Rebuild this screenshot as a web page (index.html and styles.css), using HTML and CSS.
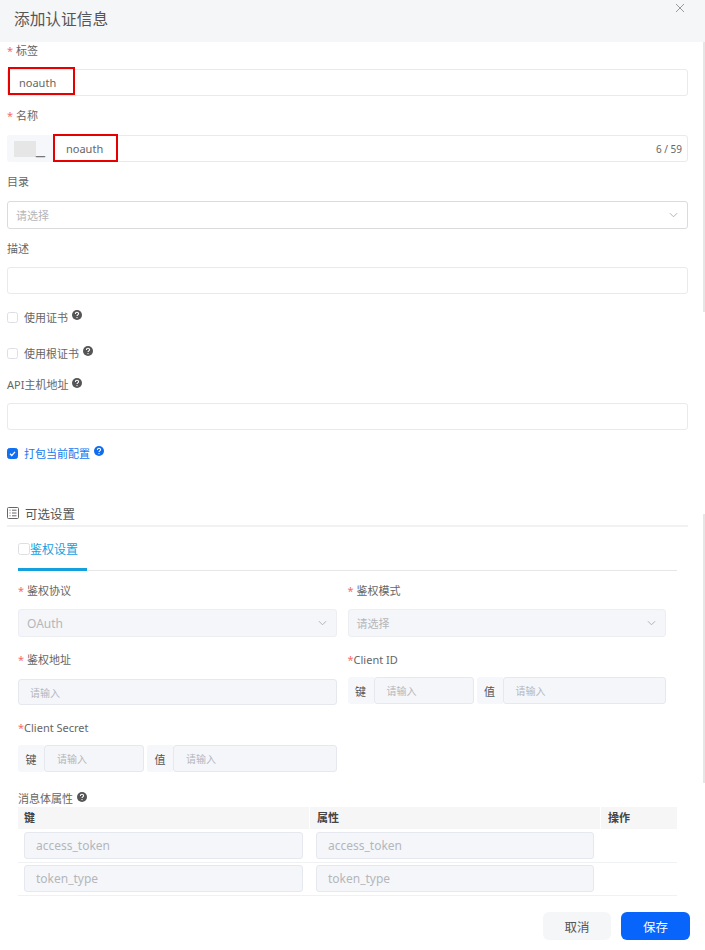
FILE: index.html
```html
<!DOCTYPE html>
<html lang="zh-CN">
<head>
<meta charset="utf-8">
<title>添加认证信息</title>
<link rel="stylesheet" href="styles.css">
</head>
<body>
<svg class="defs" width="0" height="0" aria-hidden="true">
  <symbol id="help" viewBox="0 0 10 10">
    <circle cx="5" cy="5" r="5" fill="currentColor"/>
    <path d="M3.4 3.9c0-1 .7-1.6 1.6-1.6s1.6.6 1.6 1.4c0 1.2-1.6 1.2-1.6 2.4" fill="none" stroke="#fff" stroke-width="1.1"/>
    <circle cx="5" cy="7.6" r=".7" fill="#fff"/>
  </symbol>
  <symbol id="chev" viewBox="0 0 10 6">
    <path d="M1 1l4 4 4-4" fill="none" stroke="currentColor" stroke-width="1"/>
  </symbol>
</svg>
<div class="dialog">
  <header class="head">
    <h1 class="title">添加认证信息</h1>
    <svg class="close" viewBox="0 0 10 10" aria-label="关闭"><path d="M1 1l8 8M9 1l-8 8" stroke="currentColor" stroke-width="1" fill="none"/></svg>
  </header>
  <span class="scroll scroll-a"></span>
  <span class="scroll scroll-b"></span>

  <main class="body">
    <div class="field nudge">
      <div class="label"><i class="req">*</i> 标签</div>
      <div class="input boxed"><span class="val">noauth</span><span class="mark mark-a"></span></div>
    </div>
    <div class="field">
      <div class="label"><i class="req">*</i> 名称</div>
      <div class="group">
        <div class="prefix"><span class="redact"></span><span class="us">_</span></div>
        <div class="input boxed grow name-in"><span class="val">noauth</span><span class="count">6 / 59</span><span class="mark mark-b"></span></div>
      </div>
    </div>
    <div class="field tight">
      <div class="label">目录</div>
      <div class="input select"><span class="ph">请选择</span><svg class="chev"><use href="#chev"/></svg></div>
    </div>
    <div class="field nudge">
      <div class="label">描述</div>
      <div class="input"></div>
    </div>

    <div class="check"><span class="box"></span><span>使用证书</span><svg class="help"><use href="#help"/></svg></div>
    <div class="check check-b"><span class="box"></span><span>使用根证书</span><svg class="help"><use href="#help"/></svg></div>

    <div class="field nudge">
      <div class="label">API主机地址<svg class="help help-l"><use href="#help"/></svg></div>
      <div class="input"></div>
    </div>

    <div class="check on"><span class="box"><svg viewBox="0 0 10 10"><path d="M2.2 5.2l2 2 3.6-4" fill="none" stroke="#fff" stroke-width="1.4"/></svg></span><span>打包当前配置</span><svg class="help"><use href="#help"/></svg></div>

    <div class="section">
      <svg class="list-icon" viewBox="0 0 12 12"><rect x=".5" y=".5" width="11" height="11" rx="1" fill="none" stroke="currentColor"/><path d="M2.5 3.2h1M2.5 6h1M2.5 8.8h1M5 3.2h4.5M5 6h4.5M5 8.8h4.5" stroke="currentColor" fill="none"/></svg>
      <span>可选设置</span>
    </div>

    <div class="inner">
      <div class="tabs">
        <div class="tab"><span class="box"></span><span>鉴权设置</span></div>
      </div>

      <div class="grid">
        <div class="nudge">
          <div class="label sub"><i class="req">*</i> 鉴权协议</div>
          <div class="input select dim"><span class="txt">OAuth</span><svg class="chev"><use href="#chev"/></svg></div>
        </div>
        <div class="nudge">
          <div class="label sub"><i class="req">*</i> 鉴权模式</div>
          <div class="input select dim"><span class="ph">请选择</span><svg class="chev"><use href="#chev"/></svg></div>
        </div>
        <div>
          <div class="label sub addr"><i class="req">*</i> 鉴权地址</div>
          <div class="input dim tall"><span class="ph small">请输入</span></div>
        </div>
        <div>
          <div class="label sub kv-label"><i class="req">*</i>Client ID</div>
          <div class="kv">
            <span class="addon">键</span><div class="input dim key"><span class="ph small">请输入</span></div>
            <span class="addon second">值</span><div class="input dim grow"><span class="ph small">请输入</span></div>
          </div>
        </div>
        <div class="secret">
          <div class="label sub kv-label"><i class="req">*</i>Client Secret</div>
          <div class="kv">
            <span class="addon">键</span><div class="input dim key"><span class="ph small">请输入</span></div>
            <span class="addon second">值</span><div class="input dim grow"><span class="ph small">请输入</span></div>
          </div>
        </div>
      </div>

      <div class="label props">消息体属性<svg class="help help-l"><use href="#help"/></svg></div>
      <div class="table">
        <div class="tr th"><div>键</div><div>属性</div><div>操作</div></div>
        <div class="tr"><div><div class="input dim"><span class="txt">access_token</span></div></div><div><div class="input dim"><span class="txt">access_token</span></div></div><div></div></div>
        <div class="tr"><div><div class="input dim"><span class="txt">token_type</span></div></div><div><div class="input dim"><span class="txt">token_type</span></div></div><div></div></div>
      </div>
    </div>

    <footer class="foot">
      <button class="btn">取消</button>
      <button class="btn primary">保存</button>
    </footer>
  </main>
</div>
</body>
</html>
```

FILE: styles.css
```css
* { box-sizing: border-box; }
html, body { margin: 0; height: 950px; overflow: hidden; background: #fff; }
body { font-family: "Noto Sans", "Noto Sans CJK SC", sans-serif; font-size: 11px; color: #666; }
.defs { position: absolute; }
.dialog { position: relative; width: 705px; height: 950px; }

.head { height: 42px; background: #f5f6f8; position: relative; }
.title { margin: 0; padding-left: 14px; font-size: 15.7px; line-height: 38px; font-weight: 400; color: #555; }
.close { position: absolute; left: 675px; top: 3px; width: 10px; height: 10px; color: #999; }

.scroll { position: absolute; left: 703px; width: 2px; background: #e6e6e6; }
.scroll-a { top: 42px; height: 270px; }
.scroll-b { top: 514px; height: 269px; }

.body { padding: 0 17px 0 7px; }
.field { margin-bottom: 12px; }
.field.tight { margin-bottom: 11px; }
.label { height: 16px; line-height: 16px; margin-bottom: 11px; color: #666; display: flex; align-items: center; white-space: pre; }
.nudge .label { padding-top: 1px; }
.req { font-style: normal; color: #f56c6c; }

.input { position: relative; height: 27px; border: 1.5px solid #e8eaee; border-radius: 3px; background: #fff; display: flex; align-items: center; padding: 0 11px; }
.select { height: 28px; border-color: #d9dbde; justify-content: space-between; padding: 0 9px 0 8px; }
.val { font-size: 11px; color: #666; position: relative; top: -.5px; }
.ph { font-size: 11px; color: #b4b6ba; }
.ph.small { font-size: 10px; }
.txt { font-size: 12px; color: #b4b6ba; }
.chev { width: 9px; height: 6px; color: #aaa; }

.group { display: flex; }
.prefix { width: 46px; height: 27px; background: #f5f7fb; border-radius: 3px 0 0 3px; display: flex; align-items: center; padding-left: 7px; position: relative; }
.redact { width: 22px; height: 16px; background: #e6e6e6; }
.us { font: 16px/16px "Liberation Sans", sans-serif; color: #777; margin-left: 0; }
.grow { flex: 1; }
.name-in { padding-left: 12px; justify-content: space-between; padding-right: 5px; border-radius: 0 3px 3px 0; }
.count { font-size: 10px; color: #666; }

.mark { position: absolute; border: 2px solid #e60000; pointer-events: none; }
.mark-a { left: 0; top: -3px; width: 67px; height: 28px; }
.mark-b { left: -1.5px; top: -2px; width: 65px; height: 28px; }

.check { height: 22px; display: flex; align-items: center; margin-bottom: 14px; color: #666; }
.check-b { margin-bottom: 12px; }
.box { width: 11px; height: 11px; border: 1px solid #dcdfe3; border-radius: 2.5px; background: #fff; margin-right: 6px; display: flex; flex: none; }
.help { width: 10px; height: 10px; color: #555; margin-left: 4px; position: relative; top: -2px; }
.help-l { margin-left: 4px; }
.check.on { color: #1478f0; margin-bottom: 39px; }
.check.on .box { background: #1070f0; border-color: #1070f0; }
.check.on .box svg { width: 9px; height: 9px; }
.check.on .help { color: #0f6df0; }

.section { height: 24px; border-bottom: 2px solid #f2f2f2; display: flex; align-items: center; padding-bottom: 2px; font-size: 12.5px; color: #555; gap: 6px; }
.list-icon { width: 12px; height: 12px; color: #666; }

.inner { padding: 0 11px; }
.tabs { height: 44px; border-bottom: 1px solid #e4e6e8; position: relative; display: flex; }
.tab { width: 69px; height: 44px; border-bottom: 3px solid #149fdd; color: #16a0e0; display: flex; align-items: center; font-size: 12px; padding-top: 3px; margin-bottom: -1px; }
.tab .box { margin-right: 0; width: 12px; height: 12px; }

.grid { display: grid; grid-template-columns: 318.5px 318.5px; column-gap: 11px; padding-top: 11px; }
.label.sub { margin-bottom: 11px; }
.dim { background: #f5f6fa; border-color: #e6e8ef; }
.select.dim { border-color: #eceef2; }
.addr { margin-top: 15px; }
.tall { height: 26px; padding-left: 11px; }
.kv-label { margin-top: 15px; margin-bottom: 9px !important; }
.kv { display: flex; }
.addon { width: 26px; height: 27px; flex: none; background: #f5f7fb; border-radius: 3px 0 0 3px; display: flex; align-items: center; justify-content: center; font-size: 11px; color: #555; }
.addon.second { margin-left: 3px; }
.kv .input { height: 27px; padding-left: 12px; }
.key { width: 100px; flex: none; }
.secret { margin-top: 0; }

.props { margin-top: 19px; margin-bottom: 0; }
.table { position: relative; }
.tr { display: grid; grid-template-columns: 291px 291px 1fr; height: 33.5px; align-items: center; border-bottom: 1px solid #f0f1f3; }
.tr > div { padding: 0 6px; }
.tr > div + div { padding-left: 7px; }
.th { height: 22px; background: #f6f6f7; border-bottom: 0; font-weight: 700; color: #444; font-size: 11px; }
.th > div { height: 22px; line-height: 22px; }
.th > div + div { border-left: 1px solid #fff; }
.tr .input { height: 27px; padding-left: 11px; }

.foot { display: flex; justify-content: flex-end; gap: 10px; margin-top: 16px; margin-right: -2px; }
.btn { width: 68px; height: 28px; border: 0; border-radius: 6px; background: #f5f6f8; color: #555; font: 12.5px "Noto Sans", "Noto Sans CJK SC", sans-serif; padding: 0; }
.btn.primary { width: 69px; background: #0765fb; color: #fff; }
```
